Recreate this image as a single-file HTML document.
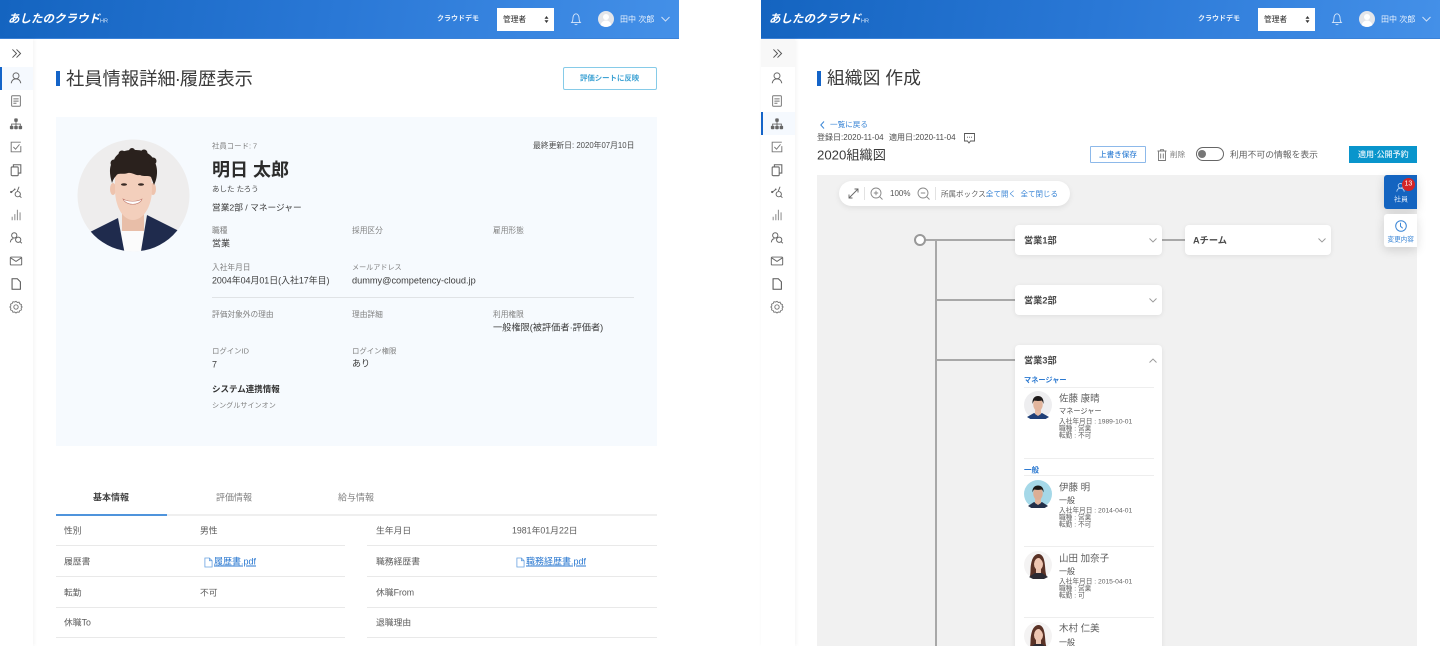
<!DOCTYPE html>
<html lang="ja">
<head>
<meta charset="utf-8">
<title>あしたのクラウド</title>
<style>
html,body{margin:0;padding:0;background:#fff;overflow:hidden;width:1440px;height:646px}
body{position:relative;font-family:"Liberation Sans","Noto Sans CJK JP",sans-serif;color:#444}
#w{position:absolute;left:0;top:0;width:1440px;height:646px;overflow:hidden;filter:blur(.35px)}
.t{position:absolute;white-space:nowrap;line-height:1.2;transform:translateY(calc(-50% + .1em))}
.a{position:absolute}
.hd{position:absolute;top:0;width:679px;height:39px;background:linear-gradient(100deg,#1464c0 0%,#2a78d6 50%,#4490e8 100%);border-bottom:1px solid #3b82d8;box-sizing:border-box}
.side{position:absolute;top:39px;width:33px;height:607px;background:#fff;box-shadow:1px 0 4px rgba(0,0,0,.05)}
.lbl{font-size:7.700px;color:#808080}
.val{font-size:9px;color:#3c3c3c}
.rl{font-size:8.800px;color:#5c5c5c}
.ln{position:absolute;height:1px;background:#e9e9e9}
.card{position:absolute;background:#fff;border-radius:4px;box-shadow:0 1px 5px rgba(0,0,0,.08)}
.gl{position:absolute;background:#a8a8a8}
.small{font-size:6.700px;color:#606060}
.nm{font-size:9.500px;color:#5c5c5c}
.ps{font-size:7.200px;color:#4c4c4c}
.dep{font-size:9.200px;font-weight:700;color:#4a4a4a}
svg{position:absolute;overflow:visible}
</style>
</head>
<body>
<div id="w">
<svg width="0" height="0" style="position:absolute">
<defs>
<symbol id="i-dbl" viewBox="0 0 16 16"><path d="M3 3l5 5-5 5M8 3l5 5-5 5" fill="none" stroke="#555" stroke-width="1.2"/></symbol>
<symbol id="i-user" viewBox="0 0 16 16"><g fill="none" stroke="#666" stroke-width="1.100"><circle cx="8" cy="5.500" r="3.400"/><path d="M2.500 14c.6-3.400 2.600-5 5.500-5s4.900 1.600 5.500 5"/></g></symbol>
<symbol id="i-doc" viewBox="0 0 16 16"><g fill="none" stroke="#777" stroke-width="1.100"><rect x="3" y="2" width="10" height="12" rx="1"/></g><path d="M5 5h6v1.200H5zM5 7.500h6v1.200H5zM5 10h3.500v1.200H5z" fill="#777"/></symbol>
<symbol id="i-org" viewBox="0 0 16 16"><g fill="#666"><rect x="6" y="1.500" width="4" height="4" rx="1"/><rect x="1" y="10" width="4" height="4" rx="1"/><rect x="6" y="10" width="4" height="4" rx="1"/><rect x="11" y="10" width="4" height="4" rx="1"/></g><path d="M8 5v5M3 10V8h10v2" fill="none" stroke="#666"/></symbol>
<symbol id="i-check" viewBox="0 0 16 16"><path d="M13.500 7v6.500h-11v-11h11" fill="none" stroke="#777" stroke-width="1.100"/><path d="M5 8l2.500 2.500L12 5" fill="none" stroke="#777" stroke-width="1.100"/></symbol>
<symbol id="i-copy" viewBox="0 0 16 16"><g fill="none" stroke="#666" stroke-width="1.200"><rect x="2.500" y="4.500" width="8" height="10" rx="1"/><path d="M5 4.500V2h8.500v9.500h-3"/></g></symbol>
<symbol id="i-net" viewBox="0 0 16 16"><g fill="none" stroke="#666" stroke-width="1.100"><circle cx="10" cy="10.500" r="3"/><path d="M12.200 12.700l2 1.800M3 8l3-2.500M9.500 7l2-5"/></g><circle cx="2.500" cy="8" r="1.300" fill="#666"/><circle cx="6.500" cy="5" r="1" fill="#666"/></symbol>
<symbol id="i-bar" viewBox="0 0 16 16"><path d="M3 10h1.300v4H3zM6 7h1.300v7H6zM9 2h1.300v12H9zM12 5h1.300v9H12z" fill="#999"/></symbol>
<symbol id="i-find" viewBox="0 0 16 16"><g fill="none" stroke="#666" stroke-width="1.100"><circle cx="6" cy="5" r="3"/><path d="M1.500 13c.3-2.600 1.500-4 3.500-4.300"/><circle cx="10.500" cy="10" r="3"/><path d="M12.700 12.200l2 1.800"/></g></symbol>
<symbol id="i-mail" viewBox="0 0 16 16"><g fill="none" stroke="#666" stroke-width="1.100"><rect x="1.500" y="3.500" width="13" height="9" rx="1"/><path d="M2 4.500l6 4 6-4"/></g></symbol>
<symbol id="i-file" viewBox="0 0 16 16"><path d="M3.500 2h6l3.500 3.500V14H3.500z" fill="none" stroke="#555" stroke-width="1.200"/></symbol>
<symbol id="i-gear" viewBox="0 0 16 16"><g fill="none" stroke="#777" stroke-width="1.100"><path d="M8 1.500l1.500 1.300 2-.3.800 1.900 1.900.8-.3 2L15 8l-1.100 1.300.3 2-1.900.8-.8 1.900-2-.3L8 14.900l-1.500-1.200-2 .3-.8-1.900-1.900-.8.300-2L1 8l1.100-1.300-.3-2 1.900-.8.800-1.900 2 .3z"/><circle cx="8" cy="8" r="2.500"/></g></symbol>
<symbol id="i-bell" viewBox="0 0 16 16"><path d="M3 12c1.300-1.300 1.500-2.500 1.500-5S6 2 8 2s3.500 2.500 3.500 5 .2 3.700 1.500 5zM6.500 14c.8.700 2.200.7 3 0" fill="none" stroke="#dce9fa" stroke-width="1"/></symbol>
<symbol id="i-pdf" viewBox="0 0 10 12"><path d="M1 1h5l3 3v7H1z M6 1v3h3" fill="none" stroke="#6aa3e0" stroke-width=".9"/></symbol>
<symbol id="man" viewBox="0 0 28 28"><circle cx="14" cy="14" r="14" fill="#eeeef0"/><path d="M3 26l7-4 4 2 4-2 7 4-5 3H8z" fill="#1f3f78"/><path d="M11 19h6v4l-3 2-3-2z" fill="#e5bba5"/><ellipse cx="14" cy="13.500" rx="4.800" ry="6.500" fill="#e2b59d"/><path d="M8.500 13c-.5-6 2.500-8 5.500-8s6 2 5.500 8c-.8-2-1-3-2-3.500-2 .6-5 .6-7 0-1 .5-1.200 1.500-2 3.500z" fill="#1d1a1a"/></symbol>
<symbol id="man2" viewBox="0 0 28 28"><circle cx="14" cy="14" r="14" fill="#a5d8e8"/><path d="M4 26l6-4 4 2 4-2 6 4-5 3H9z" fill="#23304a"/><path d="M11 19h6v4l-3 2-3-2z" fill="#e2b59d"/><ellipse cx="14" cy="13.500" rx="4.800" ry="6.500" fill="#dcae95"/><path d="M8.500 12.500c-.5-5 2.500-7 5.500-7s6 2 5.500 7c-.8-2-1-2.800-2-3-2 .5-5 .5-7 0-1 .2-1.200 1-2 3z" fill="#1b1918"/></symbol>
<symbol id="wom" viewBox="0 0 28 28"><circle cx="14" cy="14" r="14" fill="#f4f3f3"/><path d="M6 25c1-5 0-8 1.500-14C9 5.500 11.500 3 14.500 3s5 2.500 6 8c1 6 .5 9 2 14-3 2.500-14 3-16.500 0z" fill="#5a3226"/><ellipse cx="14.500" cy="13" rx="4.500" ry="6" fill="#eec6b2"/><path d="M12 18h5v4h-5z" fill="#eac3af"/><path d="M5 26l6-4h7l6 4-4 2H9z" fill="#2b2a33"/><path d="M10 12c1-4 3-5 5-6 1 2 3 3 4 6l1-3-3-4h-6l-3 4z" fill="#5a3226"/></symbol>
<clipPath id="cm"><circle cx="73.500" cy="70.500" r="56"/></clipPath>
</defs>
</svg>

<!-- LEFT PANEL -->
<div class="hd" style="left:0"></div>
<span class="t" style="left:8px;top:19px;font-size:11.500px;font-weight:700;font-style:italic;color:#fff">あしたのクラウド</span>
<span class="t" style="left:100px;top:21px;font-size:5.500px;color:#dce9fa">HR</span>
<span class="t" style="left:437px;top:19px;font-size:7px;font-weight:700;color:#e8f1fc">クラウドデモ</span>
<div class="a" style="left:497px;top:8px;width:57px;height:23px;background:#fff"></div>
<span class="t" style="left:503px;top:19px;font-size:7.700px;font-weight:500;color:#444">管理者</span>
<svg style="left:544px;top:16px" width="5" height="7"><path d="M2.500 0l2 2.700h-4zM2.500 7l2-2.700h-4z" fill="#333"/></svg>
<svg style="left:569px;top:12px" width="14" height="14"><use href="#i-bell"/></svg>
<svg style="left:598px;top:11px" width="16" height="16" viewBox="0 0 16 16"><circle cx="8" cy="8" r="8" fill="#e4e6ea"/><circle cx="8" cy="6" r="3" fill="#fff"/><path d="M2.500 14c1-3 3-4.500 5.500-4.500s4.500 1.500 5.500 4.500c-3 2.500-8 2.500-11 0z" fill="#fff"/></svg>
<span class="t" style="left:620px;top:19px;font-size:8px;color:#e8f1fc">田中 次郎</span>
<svg style="left:661px;top:16px" width="9" height="6"><path d="M.5 1l4 4 4-4" fill="none" stroke="#cfe0f7" stroke-width="1"/></svg>

<div class="side" style="left:0"></div>
<div class="a" style="left:0;top:67px;width:33px;height:23px;background:#f5f9fe"></div>
<div class="a" style="left:0;top:67px;width:2px;height:23px;background:#1464c8"></div>
<svg style="left:10px;top:47px" width="13" height="13"><use href="#i-dbl"/></svg>
<svg style="left:9px;top:71px" width="14" height="14"><use href="#i-user"/></svg>
<svg style="left:9px;top:94px" width="14" height="14"><use href="#i-doc"/></svg>
<svg style="left:9px;top:117px" width="14" height="14"><use href="#i-org"/></svg>
<svg style="left:9px;top:140px" width="14" height="14"><use href="#i-check"/></svg>
<svg style="left:9px;top:163px" width="14" height="14"><use href="#i-copy"/></svg>
<svg style="left:9px;top:185px" width="14" height="14"><use href="#i-net"/></svg>
<svg style="left:9px;top:208px" width="14" height="14"><use href="#i-bar"/></svg>
<svg style="left:9px;top:231px" width="14" height="14"><use href="#i-find"/></svg>
<svg style="left:9px;top:254px" width="14" height="14"><use href="#i-mail"/></svg>
<svg style="left:9px;top:277px" width="14" height="14"><use href="#i-file"/></svg>
<svg style="left:9px;top:300px" width="14" height="14"><use href="#i-gear"/></svg>

<div class="a" style="left:56px;top:71px;width:4px;height:15px;background:#1464c8"></div>
<span class="t" style="left:66px;top:77px;font-size:18.300px;color:#3a3a3a">社員情報詳細<span style="margin:0 -1px">·</span>履歴表示</span>
<div class="a" style="left:563px;top:67px;width:94px;height:23px;box-sizing:border-box;border:1.500px solid #86cbe8;border-radius:2px;background:#fff"></div>
<span class="t" style="left:580px;top:78px;font-size:7.400px;font-weight:700;color:#3fa3d4">評価シートに反映</span>

<div class="a" style="left:56px;top:117px;width:601px;height:329px;background:#f6fafe"></div>
<svg style="left:60px;top:125px" width="150" height="140" viewBox="0 0 150 140">
<g clip-path="url(#cm)">
<rect width="150" height="140" fill="#eeeded"/>
<path d="M62 84h22v26H62z" fill="#e8bea8"/>
<path d="M61 106h23l-2 24H64z" fill="#fbfbfb"/>
<path d="M28 108l30-15 7 37H40z" fill="#1f2b4d"/>
<path d="M87 90l32 16-16 26H80z" fill="#1f2b4d"/>
<ellipse cx="53" cy="64" rx="3" ry="6" fill="#eec3ad"/>
<ellipse cx="93" cy="64" rx="3" ry="6" fill="#eec3ad"/>
<path d="M55 46h36l1 18c0 18-9 31-19 31S55 82 55 64z" fill="#f3cfbc"/>
<path d="M52 58C49 48 49 40 54 35C56 28 66 24 76 25C86 25 94 31 96 40C98 46 97 54 94 60L91 52C88 50 84 52 80 50C76 51 72 47 68 48C63 50 58 47 56 51C54 53 53 55 52 58Z" fill="#2a211d"/>
<g fill="#2a211d"><circle cx="54" cy="38" r="3.500"/><circle cx="62" cy="29" r="3.500"/><circle cx="72" cy="26" r="3"/><circle cx="84" cy="28" r="3.500"/><circle cx="93" cy="36" r="3.500"/></g>
<ellipse cx="64" cy="59.500" rx="3" ry="1.300" fill="#3a2c26"/><ellipse cx="81" cy="59.500" rx="3" ry="1.300" fill="#3a2c26"/>
<path d="M63 74c5 3 14 3 19 0-2 7-16 7-19 0z" fill="#fff" stroke="#c07c70" stroke-width=".6"/>
</g></svg>

<span class="t" style="left:212px;top:146px;font-size:7.400px;color:#808080">社員コード: 7</span>
<span class="t" style="left:533px;top:145px;font-size:7.800px;color:#4c4c4c">最終更新日: 2020年07月10日</span>
<span class="t" style="left:212px;top:169px;font-size:18px;font-weight:700;color:#2c2c2c">明日 太郎</span>
<span class="t" style="left:212px;top:188px;font-size:7.500px;color:#4c4c4c">あした たろう</span>
<span class="t" style="left:212px;top:207px;font-size:8.700px;color:#3c3c3c">営業2部 / マネージャー</span>
<span class="t lbl" style="left:212px;top:230px">職種</span>
<span class="t lbl" style="left:352px;top:230px">採用区分</span>
<span class="t lbl" style="left:493px;top:230px">雇用形態</span>
<span class="t val" style="left:212px;top:243px">営業</span>
<span class="t lbl" style="left:212px;top:267px">入社年月日</span>
<span class="t lbl" style="left:352px;top:267px;font-size:7.100px">メールアドレス</span>
<span class="t val" style="left:212px;top:280px;font-size:8.900px">2004年04月01日(入社17年目)</span>
<span class="t val" style="left:352px;top:280px;font-size:9.200px">dummy@competency-cloud.jp</span>
<div class="a" style="left:212px;top:297px;width:422px;height:1px;background:#e0e3e6"></div>
<span class="t lbl" style="left:212px;top:314px">評価対象外の理由</span>
<span class="t lbl" style="left:352px;top:314px">理由詳細</span>
<span class="t lbl" style="left:493px;top:314px">利用権限</span>
<span class="t val" style="left:493px;top:327px;font-size:9.200px">一般権限(被評価者<span>·</span>評価者)</span>
<span class="t lbl" style="left:212px;top:351px;font-size:7.400px">ログインID</span>
<span class="t lbl" style="left:352px;top:351px;font-size:7.400px">ログイン権限</span>
<span class="t val" style="left:212px;top:364px">7</span>
<span class="t val" style="left:352px;top:363px">あり</span>
<span class="t" style="left:212px;top:388px;font-size:8.500px;font-weight:700;color:#333">システム連携情報</span>
<span class="t lbl" style="left:212px;top:405px;font-size:7.100px">シングルサインオン</span>

<span class="t" style="left:93px;top:497px;font-size:9px;font-weight:700;color:#444">基本情報</span>
<span class="t" style="left:216px;top:497px;font-size:9px;color:#808080">評価情報</span>
<span class="t" style="left:338px;top:497px;font-size:9px;color:#808080">給与情報</span>
<div class="a" style="left:56px;top:514px;width:601px;height:2px;background:#efefef"></div>
<div class="a" style="left:56px;top:514px;width:111px;height:2px;background:#4f94dc"></div>
<div class="ln" style="left:56px;top:545px;width:289px"></div><div class="ln" style="left:367px;top:545px;width:290px"></div>
<div class="ln" style="left:56px;top:576px;width:289px"></div><div class="ln" style="left:367px;top:576px;width:290px"></div>
<div class="ln" style="left:56px;top:607px;width:289px"></div><div class="ln" style="left:367px;top:607px;width:290px"></div>
<div class="ln" style="left:56px;top:637px;width:289px"></div><div class="ln" style="left:367px;top:637px;width:290px"></div>
<span class="t rl" style="left:64px;top:530px">性別</span><span class="t rl" style="left:200px;top:530px">男性</span>
<span class="t rl" style="left:376px;top:530px">生年月日</span><span class="t rl" style="left:512px;top:530px">1981年01月22日</span>
<span class="t rl" style="left:64px;top:561px">履歴書</span>
<svg style="left:204px;top:557px" width="9" height="11"><use href="#i-pdf"/></svg>
<span class="t" style="left:214px;top:561px;font-size:9px;color:#2a78d0;text-decoration:underline">履歴書.pdf</span>
<span class="t rl" style="left:376px;top:561px">職務経歴書</span>
<svg style="left:516px;top:557px" width="9" height="11"><use href="#i-pdf"/></svg>
<span class="t" style="left:526px;top:561px;font-size:9px;color:#2a78d0;text-decoration:underline">職務経歴書.pdf</span>
<span class="t rl" style="left:64px;top:592px">転勤</span><span class="t rl" style="left:200px;top:592px">不可</span>
<span class="t rl" style="left:376px;top:592px">休職From</span>
<span class="t rl" style="left:64px;top:622px">休職To</span>
<span class="t rl" style="left:376px;top:622px">退職理由</span>

<!-- RIGHT PANEL -->
<div class="hd" style="left:761px"></div>
<span class="t" style="left:769px;top:19px;font-size:11.500px;font-weight:700;font-style:italic;color:#fff">あしたのクラウド</span>
<span class="t" style="left:861px;top:21px;font-size:5.500px;color:#dce9fa">HR</span>
<span class="t" style="left:1198px;top:19px;font-size:7px;font-weight:700;color:#e8f1fc">クラウドデモ</span>
<div class="a" style="left:1258px;top:8px;width:57px;height:23px;background:#fff"></div>
<span class="t" style="left:1264px;top:19px;font-size:7.700px;font-weight:500;color:#444">管理者</span>
<svg style="left:1305px;top:16px" width="5" height="7"><path d="M2.500 0l2 2.700h-4zM2.500 7l2-2.700h-4z" fill="#333"/></svg>
<svg style="left:1330px;top:12px" width="14" height="14"><use href="#i-bell"/></svg>
<svg style="left:1359px;top:11px" width="16" height="16" viewBox="0 0 16 16"><circle cx="8" cy="8" r="8" fill="#e4e6ea"/><circle cx="8" cy="6" r="3" fill="#fff"/><path d="M2.500 14c1-3 3-4.500 5.500-4.500s4.500 1.500 5.500 4.500c-3 2.500-8 2.500-11 0z" fill="#fff"/></svg>
<span class="t" style="left:1381px;top:19px;font-size:8px;color:#e8f1fc">田中 次郎</span>
<svg style="left:1422px;top:16px" width="9" height="6"><path d="M.5 1l4 4 4-4" fill="none" stroke="#cfe0f7" stroke-width="1"/></svg>

<div class="side" style="left:761px;width:34px"></div>
<div class="a" style="left:761px;top:39px;width:34px;height:28px;background:#f8f8f8"></div>
<div class="a" style="left:761px;top:112px;width:34px;height:23px;background:#f5f9fe"></div>
<div class="a" style="left:761px;top:112px;width:2px;height:23px;background:#1464c8"></div>
<svg style="left:771px;top:47px" width="13" height="13"><use href="#i-dbl"/></svg>
<svg style="left:770px;top:71px" width="14" height="14"><use href="#i-user"/></svg>
<svg style="left:770px;top:94px" width="14" height="14"><use href="#i-doc"/></svg>
<svg style="left:770px;top:117px" width="14" height="14"><use href="#i-org"/></svg>
<svg style="left:770px;top:140px" width="14" height="14"><use href="#i-check"/></svg>
<svg style="left:770px;top:163px" width="14" height="14"><use href="#i-copy"/></svg>
<svg style="left:770px;top:185px" width="14" height="14"><use href="#i-net"/></svg>
<svg style="left:770px;top:208px" width="14" height="14"><use href="#i-bar"/></svg>
<svg style="left:770px;top:231px" width="14" height="14"><use href="#i-find"/></svg>
<svg style="left:770px;top:254px" width="14" height="14"><use href="#i-mail"/></svg>
<svg style="left:770px;top:277px" width="14" height="14"><use href="#i-file"/></svg>
<svg style="left:770px;top:300px" width="14" height="14"><use href="#i-gear"/></svg>

<div class="a" style="left:817px;top:71px;width:4px;height:15px;background:#1464c8"></div>
<span class="t" style="left:827px;top:77px;font-size:17.800px;color:#3a3a3a">組織図 作成</span>
<svg style="left:820px;top:121px" width="5" height="8"><path d="M4 .5L.8 4 4 7.500" fill="none" stroke="#3b86d6" stroke-width="1"/></svg>
<span class="t" style="left:830px;top:124px;font-size:7.600px;color:#3b86d6">一覧に戻る</span>
<span class="t" style="left:817px;top:137px;font-size:8px;color:#4c4c4c">登録日:2020-11-04</span>
<span class="t" style="left:889px;top:137px;font-size:8px;color:#4c4c4c">適用日:2020-11-04</span>
<svg style="left:964px;top:133px" width="11" height="11"><path d="M.5.500h10v7.500H6.500L5 10 3.500 8H.5z" fill="none" stroke="#555" stroke-width=".9"/><path d="M3 4.200h1M5 4.200h1M7 4.200h1" stroke="#555" stroke-width=".9"/></svg>
<span class="t" style="left:817px;top:153.500px;font-size:13.200px;color:#3a3a3a">2020組織図</span>

<div class="a" style="left:1090px;top:146px;width:56px;height:17px;box-sizing:border-box;border:1.200px solid #8db9ea;border-radius:1px;background:#fff"></div>
<span class="t" style="left:1099px;top:154px;font-size:7.600px;font-weight:500;color:#3b86d6">上書き保存</span>
<svg style="left:1157px;top:149px" width="10" height="12"><path d="M.5 2h9M3.500 2V.7h3V2M1.500 2.500v9h7v-9M3.700 4.500v5M6.300 4.500v5" fill="none" stroke="#777" stroke-width=".9"/></svg>
<span class="t" style="left:1170px;top:154px;font-size:7.600px;color:#808080">削除</span>
<div class="a" style="left:1196px;top:147px;width:28px;height:14px;box-sizing:border-box;border:1.200px solid #666;border-radius:7px;background:#fff"></div>
<div class="a" style="left:1198px;top:150px;width:8px;height:8px;border-radius:50%;background:#777"></div>
<span class="t" style="left:1230px;top:154px;font-size:8.800px;color:#606060">利用不可の情報を表示</span>
<div class="a" style="left:1349px;top:146px;width:68px;height:17px;background:#0995cc"></div>
<span class="t" style="left:1358px;top:154px;font-size:8px;font-weight:500;color:#eaf7fd">適用<span>·</span>公開予約</span>

<div class="a" style="left:817px;top:175px;width:600px;height:471px;background:#f1f1f1"></div>

<div class="a" style="left:839px;top:181px;width:231px;height:25px;background:#fff;border-radius:13px;box-shadow:0 2px 6px rgba(0,0,0,.08)"></div>
<svg style="left:848px;top:188px" width="11" height="11"><path d="M1 10l9-9M6.500 1H10v3.500M1 6.500V10h3.500" fill="none" stroke="#666" stroke-width=".9"/></svg>
<div class="a" style="left:864px;top:187px;width:1px;height:13px;background:#e2e2e2"></div>
<svg style="left:870px;top:187px" width="13" height="13"><g fill="none" stroke="#888" stroke-width=".9"><circle cx="6" cy="6" r="5"/><path d="M3.800 6h4.400M6 3.800v4.400M9.700 9.700L12.500 12.500"/></g></svg>
<span class="t" style="left:890px;top:193px;font-size:8px;color:#555">100%</span>
<svg style="left:917px;top:187px" width="13" height="13"><g fill="none" stroke="#888" stroke-width=".9"><circle cx="6" cy="6" r="5"/><path d="M3.800 6h4.400M9.700 9.700L12.500 12.500"/></g></svg>
<div class="a" style="left:935px;top:187px;width:1px;height:13px;background:#e2e2e2"></div>
<span class="t" style="left:941px;top:193px;font-size:7.500px;color:#606060">所属ボックス:</span>
<span class="t" style="left:986px;top:193px;font-size:7.500px;color:#3b86d6">全て開く</span>
<span class="t" style="left:1020.500px;top:193px;font-size:7.500px;color:#3b86d6">全て閉じる</span>

<div class="gl" style="left:925px;top:239px;width:90px;height:2px"></div>
<div class="gl" style="left:935px;top:240px;width:2px;height:406px"></div>
<div class="gl" style="left:936px;top:299px;width:79px;height:2px"></div>
<div class="gl" style="left:936px;top:359px;width:79px;height:2px"></div>
<div class="gl" style="left:1162px;top:239px;width:23px;height:2px"></div>
<div class="a" style="left:914px;top:234px;width:12px;height:12px;box-sizing:border-box;border:2px solid #999;border-radius:50%;background:#fff"></div>

<div class="card" style="left:1015px;top:225px;width:147px;height:30px"></div>
<span class="t dep" style="left:1024px;top:239.500px">営業1部</span>
<svg style="left:1149px;top:238px" width="8" height="5"><path d="M.5.500l3.500 3.500 3.500-3.500" fill="none" stroke="#999" stroke-width=".9"/></svg>
<div class="card" style="left:1185px;top:225px;width:146px;height:30px"></div>
<span class="t dep" style="left:1193px;top:239.500px">Aチーム</span>
<svg style="left:1318px;top:238px" width="8" height="5"><path d="M.5.500l3.500 3.500 3.500-3.500" fill="none" stroke="#999" stroke-width=".9"/></svg>
<div class="card" style="left:1015px;top:285px;width:147px;height:30px"></div>
<span class="t dep" style="left:1024px;top:299.500px">営業2部</span>
<svg style="left:1149px;top:298px" width="8" height="5"><path d="M.5.500l3.500 3.500 3.500-3.500" fill="none" stroke="#999" stroke-width=".9"/></svg>

<div class="card" style="left:1015px;top:345px;width:147px;height:320px"></div>
<span class="t dep" style="left:1024px;top:359.500px">営業3部</span>
<svg style="left:1149px;top:358px" width="8" height="5"><path d="M.5 4.500l3.500-3.500 3.500 3.500" fill="none" stroke="#999" stroke-width=".9"/></svg>
<span class="t" style="left:1024px;top:380px;font-size:7.200px;font-weight:700;color:#2a78d0">マネージャー</span>
<div class="ln" style="left:1024px;top:387px;width:130px;background:#eee"></div>
<svg style="left:1024px;top:391px" width="28" height="28"><use href="#man"/></svg>
<span class="t nm" style="left:1059px;top:398px">佐藤 康晴</span>
<span class="t ps" style="left:1059px;top:411px">マネージャー</span>
<span class="t small" style="left:1059px;top:422px">入社年月日 : 1989-10-01</span>
<span class="t small" style="left:1059px;top:429px">職種 : 営業</span>
<span class="t small" style="left:1059px;top:435.500px">転勤 : 不可</span>
<div class="ln" style="left:1024px;top:458px;width:130px;background:#eee"></div>
<span class="t" style="left:1024px;top:469px;font-size:7.500px;font-weight:700;color:#2a78d0">一般</span>
<div class="ln" style="left:1024px;top:475px;width:130px;background:#eee"></div>
<svg style="left:1024px;top:480px" width="28" height="28"><use href="#man2"/></svg>
<span class="t nm" style="left:1059px;top:487px">伊藤 明</span>
<span class="t ps" style="left:1059px;top:500px;font-size:8px">一般</span>
<span class="t small" style="left:1059px;top:511px">入社年月日 : 2014-04-01</span>
<span class="t small" style="left:1059px;top:518px">職種 : 営業</span>
<span class="t small" style="left:1059px;top:524.500px">転勤 : 不可</span>
<div class="ln" style="left:1024px;top:546px;width:130px;background:#eee"></div>
<svg style="left:1024px;top:551px" width="28" height="28"><use href="#wom"/></svg>
<span class="t nm" style="left:1059px;top:558px">山田 加奈子</span>
<span class="t ps" style="left:1059px;top:571px;font-size:8px">一般</span>
<span class="t small" style="left:1059px;top:582px">入社年月日 : 2015-04-01</span>
<span class="t small" style="left:1059px;top:589px">職種 : 営業</span>
<span class="t small" style="left:1059px;top:595.500px">転勤 : 可</span>
<div class="ln" style="left:1024px;top:617px;width:130px;background:#eee"></div>
<svg style="left:1024px;top:622px" width="28" height="28"><use href="#wom"/></svg>
<span class="t nm" style="left:1059px;top:628px">木村 仁美</span>
<span class="t ps" style="left:1059px;top:642px;font-size:8px">一般</span>

<div class="a" style="left:1384px;top:175px;width:33px;height:34px;background:#1464c0;border-radius:3px 0 0 3px;box-shadow:0 3px 10px rgba(0,0,0,.14)"></div>
<svg style="left:1395px;top:182px" width="11" height="11" viewBox="0 0 16 16"><g fill="none" stroke="#bcd6f5" stroke-width="1.200"><circle cx="8" cy="5.500" r="3.400"/><path d="M2.500 14c.6-3.400 2.600-5 5.500-5s4.900 1.600 5.500 5"/></g></svg>
<div class="a" style="left:1402px;top:178px;width:13px;height:13px;border-radius:50%;background:#d42427"></div>
<span class="t" style="left:1404.500px;top:184px;font-size:7px;color:#fff">13</span>
<span class="t" style="left:1394px;top:200px;font-size:7px;color:#d9e8fa">社員</span>
<div class="a" style="left:1384px;top:214px;width:33px;height:33px;background:#fff;border-radius:3px 0 0 3px;box-shadow:0 3px 10px rgba(0,0,0,.14)"></div>
<svg style="left:1395px;top:220px" width="12" height="12"><g fill="none" stroke="#3b86d6" stroke-width="1"><circle cx="6" cy="6" r="5.300"/><path d="M5.500 2.800V6.300l2.200 2"/></g></svg>
<span class="t" style="left:1387.500px;top:240px;font-size:6.600px;color:#3b86d6">変更内容</span>
</div>
</body>
</html>
